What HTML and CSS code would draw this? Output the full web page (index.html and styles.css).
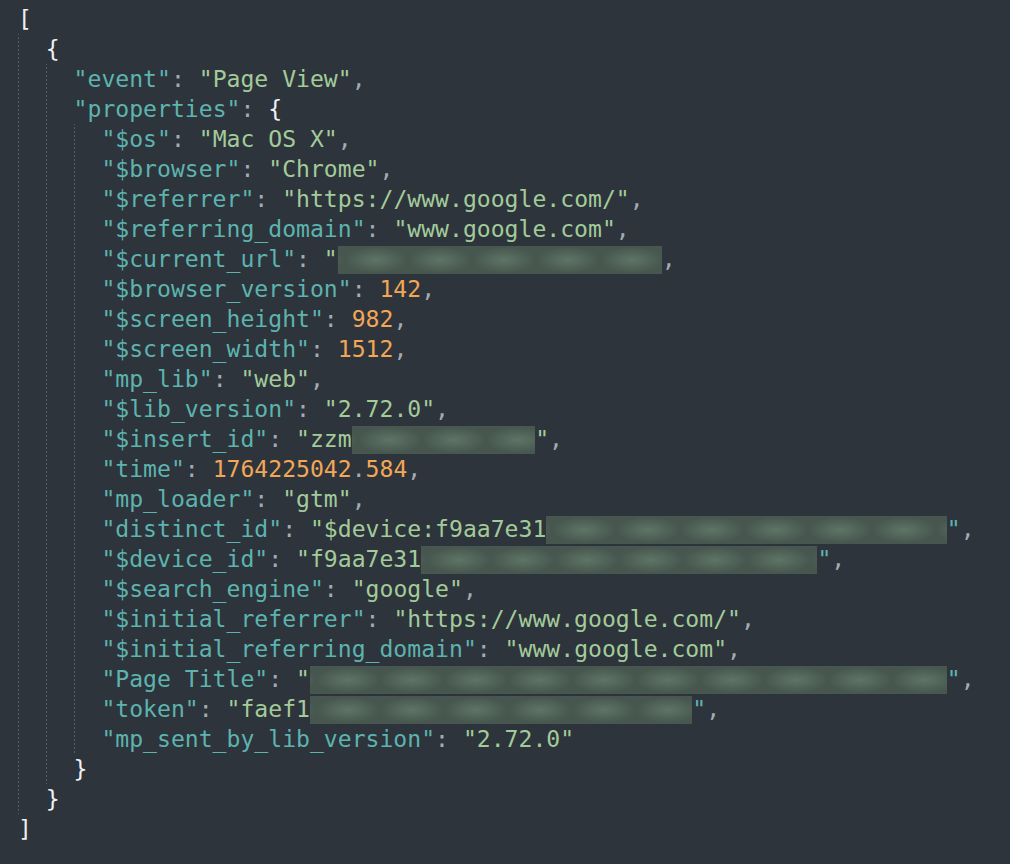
FILE: index.html
```html
<!DOCTYPE html>
<html>
<head>
<meta charset="utf-8">
<link rel="stylesheet" href="styles.css">
</head>
<body>
<div class="code">
  <div class="ln"><span class="b">[</span></div>
  <div class="blk">
    <div class="ln"><span class="b">{</span></div>
    <div class="blk">
      <div class="ln"><span class="k">"event"</span><span class="p">: </span><span class="s">"Page View"</span><span class="p">,</span></div>
      <div class="ln"><span class="k">"properties"</span><span class="p">: </span><span class="b">{</span></div>
      <div class="blk">
        <div class="ln"><span class="k">"$os"</span><span class="p">: </span><span class="s">"Mac OS X"</span><span class="p">,</span></div>
        <div class="ln"><span class="k">"$browser"</span><span class="p">: </span><span class="s">"Chrome"</span><span class="p">,</span></div>
        <div class="ln"><span class="k">"$referrer"</span><span class="p">: </span><span class="s">"https://www.google.com/"</span><span class="p">,</span></div>
        <div class="ln"><span class="k">"$referring_domain"</span><span class="p">: </span><span class="s">"www.google.com"</span><span class="p">,</span></div>
        <div class="ln"><span class="k">"$current_url"</span><span class="p">: </span><span class="s">"</span><span class="rd w-url"></span><span class="p">,</span></div>
        <div class="ln"><span class="k">"$browser_version"</span><span class="p">: </span><span class="n">142</span><span class="p">,</span></div>
        <div class="ln"><span class="k">"$screen_height"</span><span class="p">: </span><span class="n">982</span><span class="p">,</span></div>
        <div class="ln"><span class="k">"$screen_width"</span><span class="p">: </span><span class="n">1512</span><span class="p">,</span></div>
        <div class="ln"><span class="k">"mp_lib"</span><span class="p">: </span><span class="s">"web"</span><span class="p">,</span></div>
        <div class="ln"><span class="k">"$lib_version"</span><span class="p">: </span><span class="s">"2.72.0"</span><span class="p">,</span></div>
        <div class="ln"><span class="k">"$insert_id"</span><span class="p">: </span><span class="s">"zzm</span><span class="rd w-ins"></span><span class="s">"</span><span class="p">,</span></div>
        <div class="ln"><span class="k">"time"</span><span class="p">: </span><span class="n">1764225042</span><span class="p">.</span><span class="n">584</span><span class="p">,</span></div>
        <div class="ln"><span class="k">"mp_loader"</span><span class="p">: </span><span class="s">"gtm"</span><span class="p">,</span></div>
        <div class="ln"><span class="k">"distinct_id"</span><span class="p">: </span><span class="s">"$device:f9aa7e31</span><span class="rd w-dist"></span><span class="q">"</span><span class="p">,</span></div>
        <div class="ln"><span class="k">"$device_id"</span><span class="p">: </span><span class="s">"f9aa7e31</span><span class="rd w-dev"></span><span class="q">"</span><span class="p">,</span></div>
        <div class="ln"><span class="k">"$search_engine"</span><span class="p">: </span><span class="s">"google"</span><span class="p">,</span></div>
        <div class="ln"><span class="k">"$initial_referrer"</span><span class="p">: </span><span class="s">"https://www.google.com/"</span><span class="p">,</span></div>
        <div class="ln"><span class="k">"$initial_referring_domain"</span><span class="p">: </span><span class="s">"www.google.com"</span><span class="p">,</span></div>
        <div class="ln"><span class="k">"Page Title"</span><span class="p">: </span><span class="s">"</span><span class="rd w-title"></span><span class="q">"</span><span class="p">,</span></div>
        <div class="ln"><span class="k">"token"</span><span class="p">: </span><span class="s">"faef1</span><span class="rd w-tok"></span><span class="q">"</span><span class="p">,</span></div>
        <div class="ln"><span class="k">"mp_sent_by_lib_version"</span><span class="p">: </span><span class="s">"2.72.0"</span></div>
      </div>
      <div class="ln"><span class="b">}</span></div>
    </div>
    <div class="ln"><span class="b">}</span></div>
  </div>
  <div class="ln"><span class="b">]</span></div>
</div>
</body>
</html>
```

FILE: styles.css
```css
html, body {
  margin: 0;
  padding: 0;
  background: #2d343c;
}

.code {
  padding: 4px 0 0 18px;
  font-family: "DejaVu Sans Mono", "Liberation Mono", monospace;
  font-size: 23.1px;
  line-height: 30px;
  color: #e6e9ec;
}

.ln {
  height: 30px;
  white-space: pre;
}

.blk {
  padding-left: 2ch;
  background-image: linear-gradient(to bottom, #535d67 50%, transparent 50%);
  background-size: 1px 4px;
  background-repeat: repeat-y;
  background-position: 0 3px;
}

.b { color: #eef0f2; }
.p { color: #a4abb2; }
.k { color: #5db3ae; }
.q { color: #5db3ae; }
.s { color: #a3cb9a; }
.n { color: #f2a756; }

.rd {
  display: inline-block;
  height: 28px;
  vertical-align: middle;
  margin-top: -2px;
  background-color: #47574f;
  background-image: radial-gradient(ellipse closest-side, rgba(110, 136, 118, 0.6), rgba(110, 136, 118, 0) 100%);
  background-size: 64px 26px;
  background-position: 6px 1px;
  background-repeat: repeat-x;
}

.w-url { width: 23.3ch; }
.w-ins { width: 13.2ch; }
.w-dist { width: 28.8ch; }
.w-dev { width: 28.5ch; }
.w-title { width: 45.8ch; }
.w-tok { width: 27.5ch; }
```
